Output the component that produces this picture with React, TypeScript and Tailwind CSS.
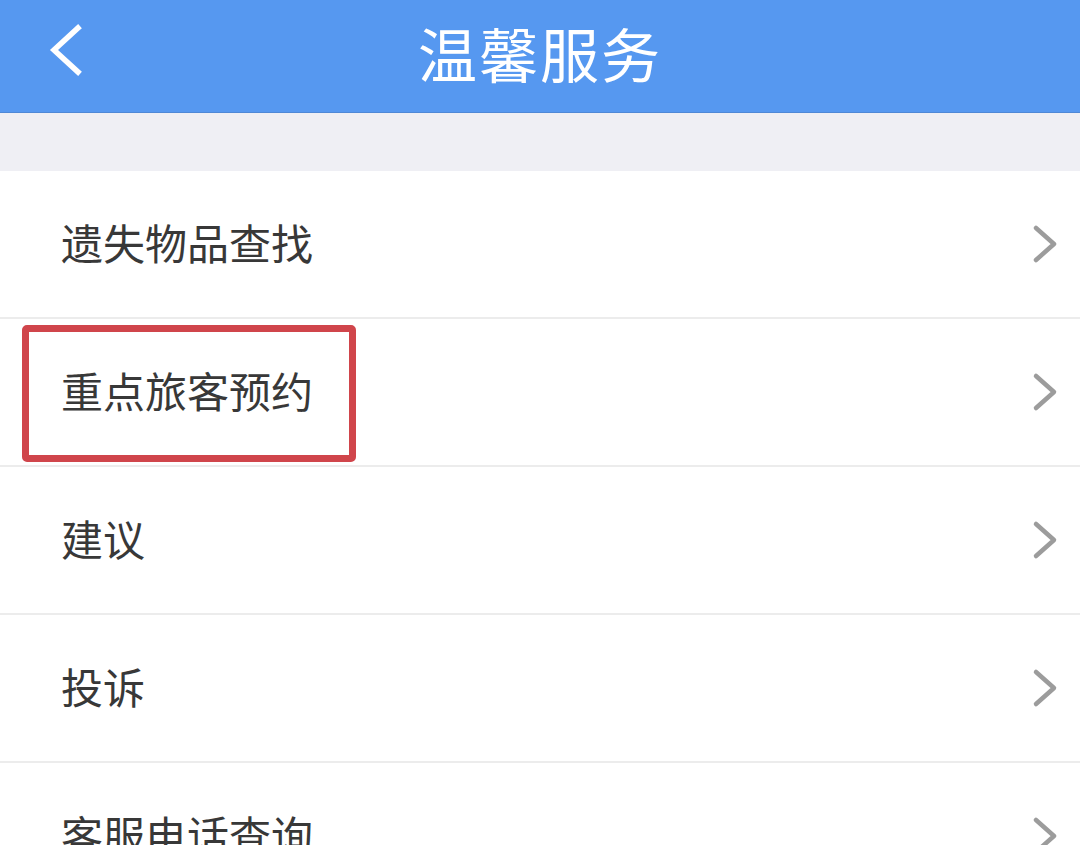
import React from "react";

const items = ["遗失物品查找", "重点旅客预约", "建议", "投诉", "客服电话查询"];

function Chevron() {
  return (
    <svg width="30" height="44" viewBox="0 0 30 44" className="shrink-0">
      <path d="M6 6 L24 22 L6 38" fill="none" stroke="#9c9c9c" strokeWidth="4.5" strokeLinecap="round" strokeLinejoin="round" />
    </svg>
  );
}

export default function App() {
  return (
    <div
      className="w-[1080px] h-[845px] overflow-hidden bg-white"
      style={{ fontFamily: '"Noto Sans CJK SC", "Noto Sans", sans-serif' }}
    >
      <div className="relative h-[113px] bg-[#5698f0] border-b border-[#4f88d6] flex items-center justify-center">
        <svg width="44" height="60" viewBox="0 0 44 60" className="absolute left-[44px] top-[22px]">
          <path d="M34 6 L10 28 L34 50" fill="none" stroke="#ffffff" strokeWidth="5.5" strokeLinecap="square" strokeLinejoin="miter" />
        </svg>
        <span className="text-[59px] leading-none text-white tracking-[2px] -mt-[8px]">温馨服务</span>
      </div>
      <div className="h-[58px] bg-[#efeff4]" />
      <div>
        {items.map((t, i) => (
          <div key={t} className="relative h-[148px] border-b-2 border-[#ececec] flex items-center pl-[61px] pr-[20px]">
            <span className="flex-1 text-[42px] leading-none text-[#383838] -mt-[4px]">{t}</span>
            <Chevron />
            {i === 1 && (
              <div className="absolute left-[22px] top-[6px] w-[334px] h-[137px] border-[7px] border-[#d0454b] rounded-[5px]" />
            )}
          </div>
        ))}
      </div>
    </div>
  );
}
